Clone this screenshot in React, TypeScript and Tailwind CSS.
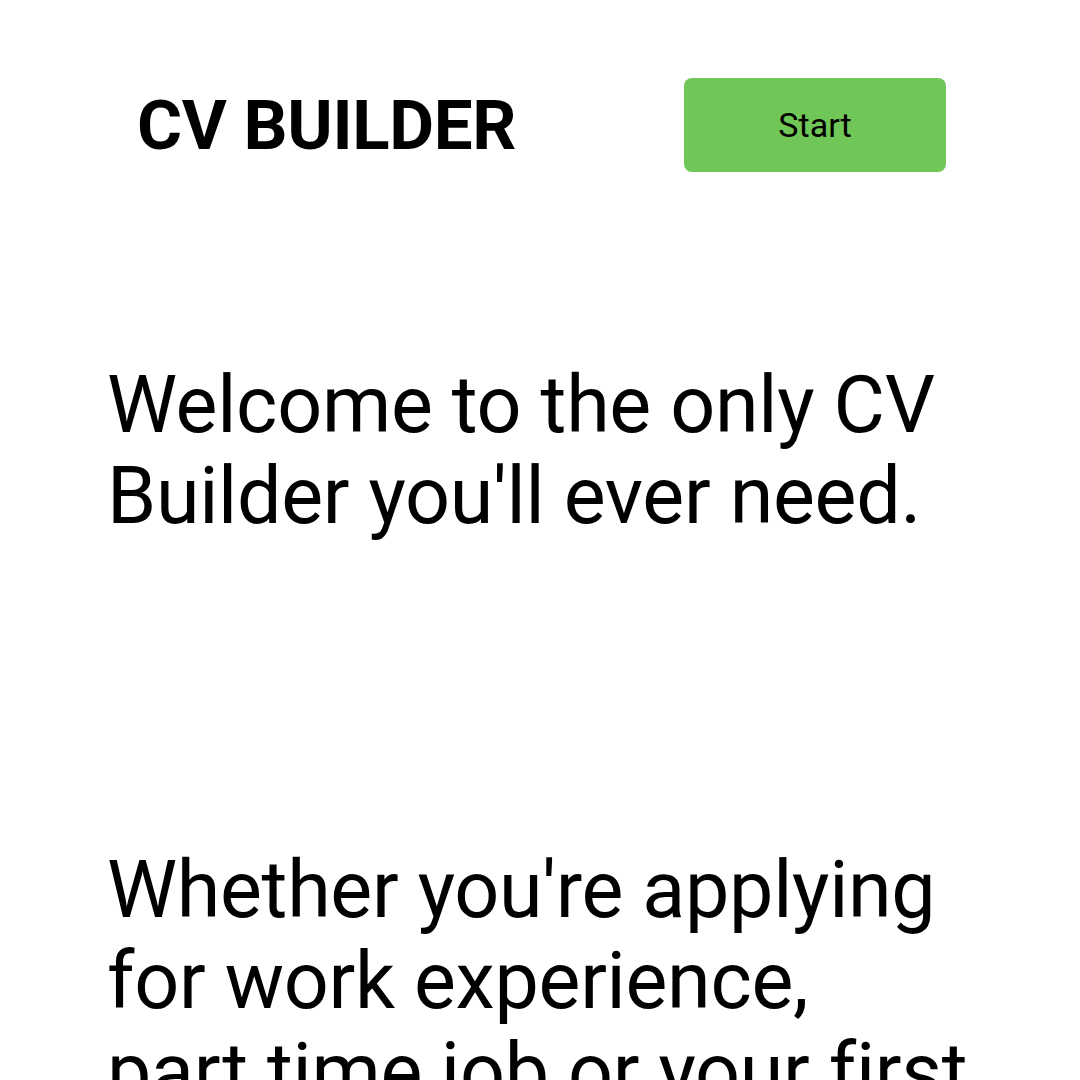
import React from 'react';

const App = () => {
  return (
    <div className="min-h-screen w-[1080px] h-[1080px] overflow-hidden bg-white text-black font-['Roboto',sans-serif]">
      <header className="flex items-center justify-between pl-[137px] pr-[134px] pt-[78px]">
        <h1 className="text-[69px] font-bold leading-none tracking-[-0.3px]">CV BUILDER</h1>
        <button className="w-[262px] h-[94px] rounded-[8px] bg-[#70c656] text-[34px] text-black">
          Start
        </button>
      </header>

      <main className="pl-[107px] pr-[100px]">
        <p className="mt-[188px] text-[79px] leading-[91px] tracking-[-0.3px]">
          Welcome to the only CV Builder you'll ever need.
        </p>
        <p className="mt-[303px] text-[79px] leading-[91px] tracking-[-0.3px]">
          Whether you're applying for work experience,
          <br />
          part time job or your first full time role, we've got you covered.
        </p>
      </main>
    </div>
  );
};

export default App;
